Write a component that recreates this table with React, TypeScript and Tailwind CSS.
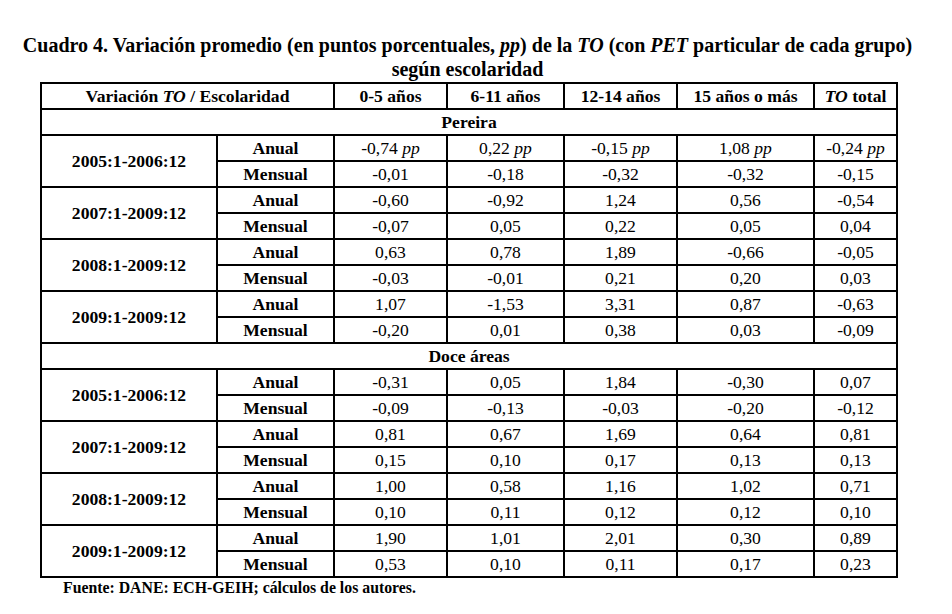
import React from "react";

type Block = { period: string; anual: string[]; mensual: string[] };

const pereira: Block[] = [
  { period: "2005:1-2006:12", anual: ["-0,74", "0,22", "-0,15", "1,08", "-0,24"], mensual: ["-0,01", "-0,18", "-0,32", "-0,32", "-0,15"] },
  { period: "2007:1-2009:12", anual: ["-0,60", "-0,92", "1,24", "0,56", "-0,54"], mensual: ["-0,07", "0,05", "0,22", "0,05", "0,04"] },
  { period: "2008:1-2009:12", anual: ["0,63", "0,78", "1,89", "-0,66", "-0,05"], mensual: ["-0,03", "-0,01", "0,21", "0,20", "0,03"] },
  { period: "2009:1-2009:12", anual: ["1,07", "-1,53", "3,31", "0,87", "-0,63"], mensual: ["-0,20", "0,01", "0,38", "0,03", "-0,09"] },
];

const doce: Block[] = [
  { period: "2005:1-2006:12", anual: ["-0,31", "0,05", "1,84", "-0,30", "0,07"], mensual: ["-0,09", "-0,13", "-0,03", "-0,20", "-0,12"] },
  { period: "2007:1-2009:12", anual: ["0,81", "0,67", "1,69", "0,64", "0,81"], mensual: ["0,15", "0,10", "0,17", "0,13", "0,13"] },
  { period: "2008:1-2009:12", anual: ["1,00", "0,58", "1,16", "1,02", "0,71"], mensual: ["0,10", "0,11", "0,12", "0,12", "0,10"] },
  { period: "2009:1-2009:12", anual: ["1,90", "1,01", "2,01", "0,30", "0,89"], mensual: ["0,53", "0,10", "0,11", "0,17", "0,23"] },
];

const cell = "border-2 border-black p-0 text-center align-middle h-[26px] leading-[22px]";

function Section({ name, blocks, pp }: { name: string; blocks: Block[]; pp?: boolean }) {
  return (
    <>
      <tr>
        <td colSpan={7} className={`${cell} font-bold`}>{name}</td>
      </tr>
      {blocks.map((b, i) => (
        <React.Fragment key={b.period}>
          <tr>
            <td rowSpan={2} className={`${cell} font-bold`}>{b.period}</td>
            <td className={`${cell} font-bold`}>Anual</td>
            {b.anual.map((v, j) => (
              <td key={j} className={cell}>
                {v}
                {pp && i === 0 ? <> <i>pp</i></> : null}
              </td>
            ))}
          </tr>
          <tr>
            <td className={`${cell} font-bold`}>Mensual</td>
            {b.mensual.map((v, j) => (
              <td key={j} className={cell}>{v}</td>
            ))}
          </tr>
        </React.Fragment>
      ))}
    </>
  );
}

export default function App() {
  return (
    <div className="w-[952px] h-[614px] bg-white text-black overflow-hidden pt-[33px] font-['Liberation_Serif','Times_New_Roman',serif]">
      <div className="w-[935px] text-center font-bold text-[20px] leading-[24px]">
        <div>
          Cuadro 4. Variación promedio (en puntos porcentuales, <i>pp</i>) de la <i>TO</i> (con <i>PET</i> particular de cada grupo)
        </div>
        <div>según escolaridad</div>
      </div>
      <table className="ml-[40px] mt-[1px] border-collapse table-fixed w-[856px] text-[17.6px]">
        <colgroup>
          <col className="w-[176px]" />
          <col className="w-[117px]" />
          <col className="w-[113px]" />
          <col className="w-[117px]" />
          <col className="w-[113px]" />
          <col className="w-[137px]" />
          <col className="w-[83px]" />
        </colgroup>
        <tbody>
          <tr>
            <td colSpan={2} className={`${cell} font-bold`}>
              Variación <i>TO</i> / Escolaridad
            </td>
            <td className={`${cell} font-bold`}>0-5 años</td>
            <td className={`${cell} font-bold`}>6-11 años</td>
            <td className={`${cell} font-bold`}>12-14 años</td>
            <td className={`${cell} font-bold`}>15 años o más</td>
            <td className={`${cell} font-bold`}>
              <i>TO</i> total
            </td>
          </tr>
          <Section name="Pereira" blocks={pereira} pp />
          <Section name="Doce áreas" blocks={doce} />
        </tbody>
      </table>
      <div className="pl-[63px] font-bold text-[15.8px] leading-[20px]">
        Fuente: DANE: ECH-GEIH; cálculos de los autores.
      </div>
    </div>
  );
}
